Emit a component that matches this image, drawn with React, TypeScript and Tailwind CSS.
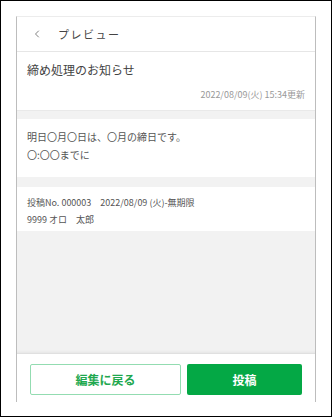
import { ChevronLeft } from "lucide-react";

const font = { fontFamily: '"Noto Sans CJK JP", "Noto Sans", sans-serif' };

export default function App() {
  return (
    <div
      className="w-[332px] h-[417px] border border-black bg-white pl-[15px] pt-[15px] pr-[15px] flex flex-col"
      style={font}
    >
      <div className="w-[300px] h-[386px] flex flex-col border-x border-x-[#bdbdbd] border-t border-t-[#ececec] bg-[#f2f2f2]">
        {/* ヘッダー */}
        <div className="h-[35px] flex items-center bg-white border-b border-[#e6e6e6]">
          <ChevronLeft className="ml-[14px] text-[#555]" size={12} strokeWidth={1.5} />
          <span className="ml-[15px] text-[11px] tracking-[1.5px] text-[#444]">プレビュー</span>
        </div>

        {/* タイトル */}
        <div className="bg-white px-[10px] pt-[9px] pb-[9px]">
          <p className="text-[12px] leading-[18px] text-[#444]">締め処理のお知らせ</p>
          <p className="mt-[9px] text-right text-[9px] leading-[13px] text-[#999]">2022/08/09(火) 15:34更新</p>
        </div>

        <div className="h-[9px] border-t border-[#e9e9e9]" />

        {/* 本文 */}
        <div className="bg-white px-[10px] pt-[9px] pb-[13px] text-[10px] leading-[18px] text-[#555]">
          <p>明日〇月〇日は、〇月の締日です。</p>
          <p>〇:〇〇までに</p>
        </div>

        <div className="h-[10px]" />

        {/* 投稿情報 */}
        <div className="bg-white px-[10px] pt-[7px] pb-[3px] text-[9px] leading-[17px] text-[#555]">
          <p>投稿No. 000003　2022/08/09 (火)-無期限</p>
          <p>9999 オロ　太郎</p>
        </div>

        <div className="flex-1 border-b border-[#e0e0e0] shadow-[inset_0_-3px_3px_-2px_rgba(0,0,0,0.06)]" />

        {/* フッター */}
        <div className="h-[48px] bg-white flex pl-[13px] pr-[12px] pt-[10px] gap-[6px]">
          <button className="w-[151px] h-[31px] rounded-[2px] border border-[#93dcb1] bg-white text-[12px] font-bold text-[#1fa84f]">
            編集に戻る
          </button>
          <button className="w-[115px] h-[31px] rounded-[2px] bg-[#04a845] text-[12px] font-bold text-white">
            投稿
          </button>
        </div>
      </div>
    </div>
  );
}
